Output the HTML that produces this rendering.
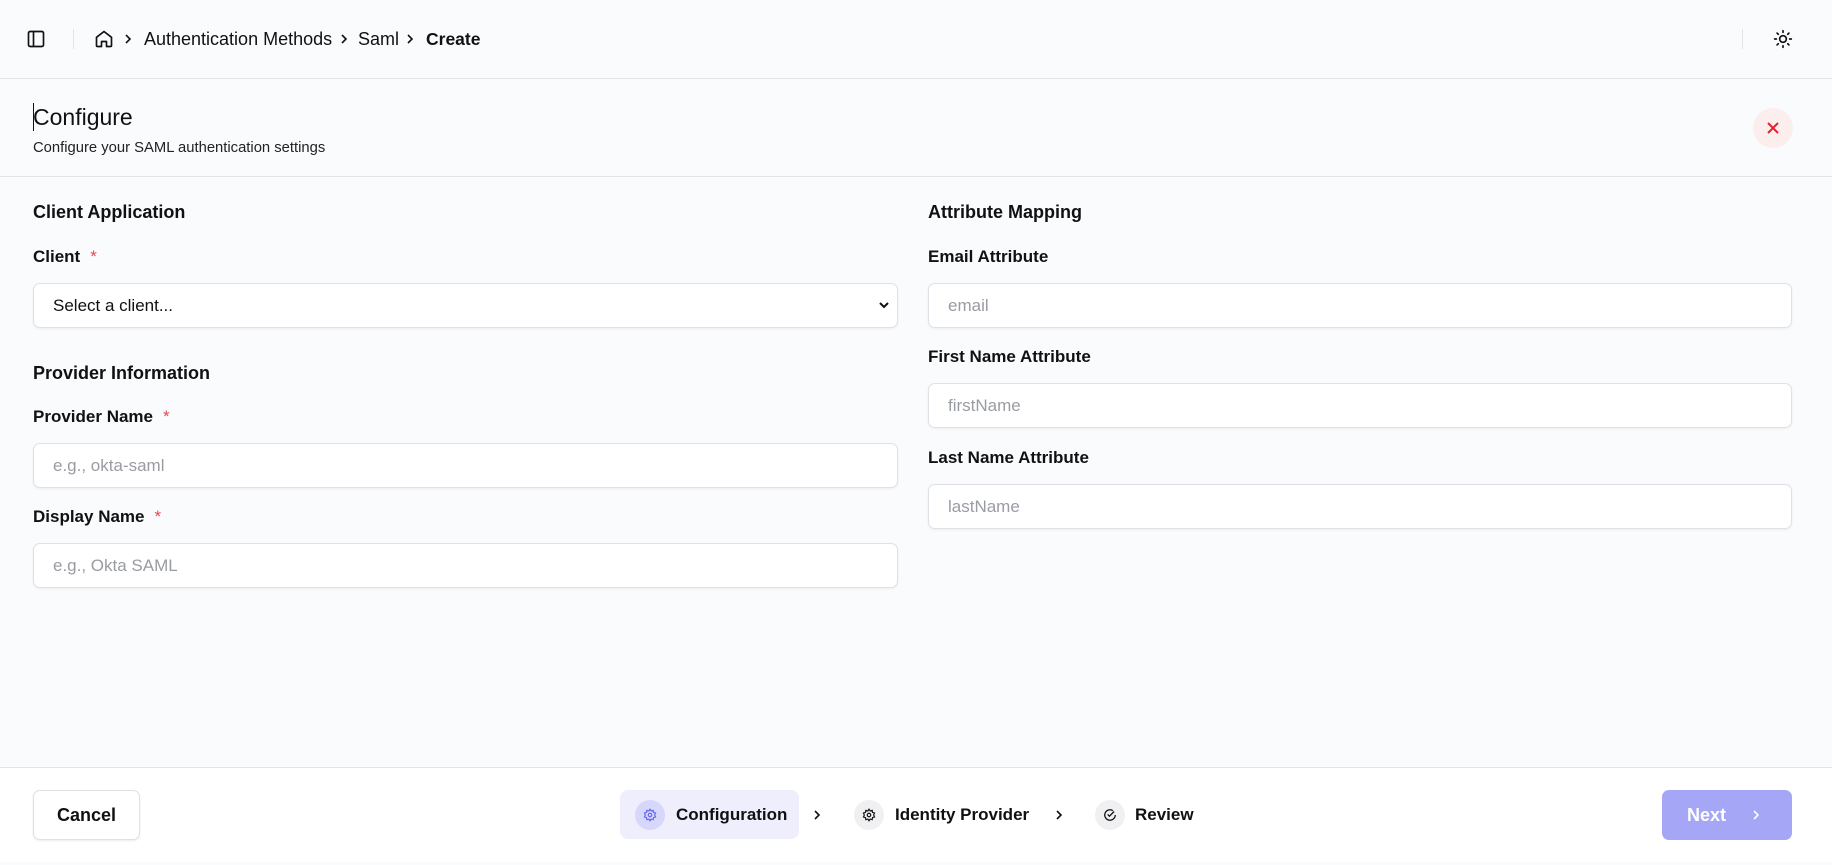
<!DOCTYPE html>
<html><head><meta charset="utf-8"><style>
*{box-sizing:border-box;margin:0;padding:0}
body{width:1832px;height:865px;background:#fafbfd;font-family:"Liberation Sans",sans-serif;color:#111;position:relative;overflow:hidden}
.a{position:absolute}
.hl{position:absolute;left:0;right:0;height:1px;background:#e2e4e8}
.lbl{position:absolute;font-size:17px;font-weight:bold;color:#111}
.req{color:#e5484d;margin-left:10px;font-weight:normal}
.sec{position:absolute;font-size:18px;font-weight:bold;color:#111}
.inp{position:absolute;height:45px;background:#fff;border:1px solid #dfe1e6;border-radius:7px;box-shadow:0 1px 2px rgba(0,0,0,.06);font-size:17px;color:#9a9ca3;padding-left:19px;line-height:43px}
</style></head><body>
<svg width="0" height="0" style="position:absolute"><defs><symbol id="chev" viewBox="0 0 12 12"><path d="M4 2l4 4-4 4" fill="none" stroke="#111" stroke-width="1.6"/></symbol></defs></svg>
<!-- header -->
<svg class="a" style="left:26px;top:29px" width="20" height="20" viewBox="0 0 24 24" fill="none" stroke="#111" stroke-width="2"><rect x="3" y="3" width="18" height="18" rx="2"/><path d="M9 3v18"/></svg>
<div class="a" style="left:73px;top:29px;width:1px;height:20px;background:#e2e4e8"></div>
<svg class="a" style="left:94px;top:29px" width="20" height="20" viewBox="0 0 24 24" fill="none" stroke="#111" stroke-width="2" stroke-linejoin="round"><path d="M3 10l9-7 9 7v10a1 1 0 0 1-1 1h-5v-6h-6v6H4a1 1 0 0 1-1-1z"/></svg>
<svg class="a" style="left:122px;top:33px" width="12" height="12"><use href="#chev"/></svg>
<div class="a" style="left:144px;top:28px;font-size:18px;line-height:22px">Authentication Methods</div>
<svg class="a" style="left:338px;top:33px" width="12" height="12"><use href="#chev"/></svg>
<div class="a" style="left:358px;top:28px;font-size:18px;line-height:22px">Saml</div>
<svg class="a" style="left:404px;top:33px" width="12" height="12"><use href="#chev"/></svg>
<div class="a" style="left:426px;top:28px;font-size:17.5px;line-height:22px;font-weight:bold">Create</div>
<div class="a" style="left:1742px;top:29px;width:1px;height:20px;background:#e2e4e8"></div>
<svg class="a" style="left:1773px;top:29px" width="20" height="20" viewBox="0 0 24 24" fill="none" stroke="#111" stroke-width="2" stroke-linecap="round"><circle cx="12" cy="12" r="4"/><path d="M12 2v2M12 20v2M4.9 4.9l1.4 1.4M17.7 17.7l1.4 1.4M2 12h2M20 12h2M4.9 19.1l1.4-1.4M17.7 6.3l1.4-1.4"/></svg>
<div class="hl" style="top:78px"></div>
<div class="a" style="left:33px;top:103px;width:1px;height:28px;background:#111"></div>
<div class="a" style="left:33px;top:103px;font-size:23px;line-height:28px;font-weight:500">Configure</div>
<div class="a" style="left:33px;top:139px;font-size:14.8px;line-height:18px;color:#222">Configure your SAML authentication settings</div>
<div class="a" style="left:1753px;top:108px;width:40px;height:40px;border-radius:50%;background:#fdeeee"></div>
<svg class="a" style="left:1765px;top:120px" width="16" height="16" viewBox="0 0 16 16" stroke="#e5202e" stroke-width="2"><path d="M3 3l10 10M13 3L3 13"/></svg>
<div class="hl" style="top:176px"></div>
<!-- left -->
<div class="sec" style="left:33px;top:202px">Client Application</div>
<div class="lbl" style="left:33px;top:247px">Client<span class="req">*</span></div>
<div class="inp" style="left:33px;top:283px;width:865px;color:#111">Select a client...</div>
<svg class="a" style="left:878px;top:299px" width="12" height="12" viewBox="0 0 12 12" fill="none" stroke="#111" stroke-width="2"><path d="M2 4l4 4 4-4"/></svg>
<div class="sec" style="left:33px;top:363px">Provider Information</div>
<div class="lbl" style="left:33px;top:407px">Provider Name<span class="req">*</span></div>
<div class="inp" style="left:33px;top:443px;width:865px">e.g., okta-saml</div>
<div class="lbl" style="left:33px;top:507px">Display Name<span class="req">*</span></div>
<div class="inp" style="left:33px;top:543px;width:865px">e.g., Okta SAML</div>
<!-- right -->
<div class="sec" style="left:928px;top:202px">Attribute Mapping</div>
<div class="lbl" style="left:928px;top:247px">Email Attribute</div>
<div class="inp" style="left:928px;top:283px;width:864px">email</div>
<div class="lbl" style="left:928px;top:347px">First Name Attribute</div>
<div class="inp" style="left:928px;top:383px;width:864px">firstName</div>
<div class="lbl" style="left:928px;top:448px">Last Name Attribute</div>
<div class="inp" style="left:928px;top:484px;width:864px">lastName</div>
<!-- footer -->
<div class="a" style="left:0;top:767px;width:1832px;height:95px;background:#fff;border-top:1px solid #e2e4e8"></div>
<div class="a" style="left:33px;top:790px;width:107px;height:50px;border:1px solid #dfe1e6;border-radius:7px;background:#fff;box-shadow:0 1px 2px rgba(0,0,0,.08);font-size:18px;font-weight:bold;text-align:center;line-height:48px">Cancel</div>
<div class="a" style="left:620px;top:790px;width:179px;height:49px;border-radius:8px;background:#eeeefc"></div>
<div class="a" style="left:635px;top:800px;width:30px;height:30px;border-radius:50%;background:#d6d7fa"></div>
<svg class="a" style="left:643px;top:808px" width="14" height="14" viewBox="0 0 24 24" fill="none" stroke="#6366f1" stroke-width="2"><circle cx="12" cy="12" r="3"/><path d="M12 2l2 3 3.5-1 .5 3.5 3.5 1-1.5 3.5 1.5 3.5-3.5 1-.5 3.5-3.5-1-2 3-2-3-3.5 1-.5-3.5-3.5-1 1.5-3.5L2.5 8.5 6 7.5 6.5 4 10 5z"/></svg>
<div class="a" style="left:676px;top:804px;font-size:17px;font-weight:bold;line-height:22px">Configuration</div>
<svg class="a" style="left:811px;top:809px" width="12" height="12"><use href="#chev"/></svg>
<div class="a" style="left:854px;top:800px;width:30px;height:30px;border-radius:50%;background:#f0f0f2"></div>
<svg class="a" style="left:862px;top:808px" width="14" height="14" viewBox="0 0 24 24" fill="none" stroke="#111" stroke-width="2"><circle cx="12" cy="12" r="3"/><path d="M12 2l2 3 3.5-1 .5 3.5 3.5 1-1.5 3.5 1.5 3.5-3.5 1-.5 3.5-3.5-1-2 3-2-3-3.5 1-.5-3.5-3.5-1 1.5-3.5L2.5 8.5 6 7.5 6.5 4 10 5z"/></svg>
<div class="a" style="left:895px;top:804px;font-size:17px;font-weight:bold;line-height:22px">Identity Provider</div>
<svg class="a" style="left:1053px;top:809px" width="12" height="12"><use href="#chev"/></svg>
<div class="a" style="left:1095px;top:800px;width:30px;height:30px;border-radius:50%;background:#f0f0f2"></div>
<svg class="a" style="left:1103px;top:808px" width="14" height="14" viewBox="0 0 24 24" fill="none" stroke="#111" stroke-width="2.2"><path d="M21 12a9 9 0 1 1-4-7.5"/><path d="M8 11l3 3 8-8"/></svg>
<div class="a" style="left:1135px;top:804px;font-size:17px;font-weight:bold;line-height:22px">Review</div>
<div class="a" style="left:1662px;top:790px;width:130px;height:50px;border-radius:7px;background:#a5a6f6;color:#fff;font-size:18px;font-weight:bold;line-height:50px;padding-left:25px">Next</div>
<svg class="a" style="left:1750px;top:809px" width="12" height="12" viewBox="0 0 12 12"><path d="M4 2l4 4-4 4" fill="none" stroke="#fff" stroke-width="1.6"/></svg>
</body></html>
